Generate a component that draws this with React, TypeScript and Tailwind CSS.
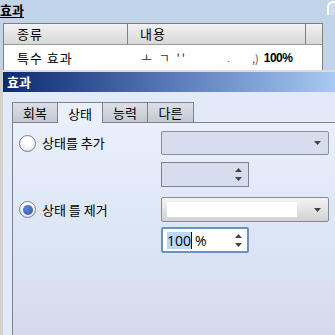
const kr = { fontFamily: '"Noto Sans CJK KR", "Noto Sans", sans-serif' };
const num = { fontFamily: '"Open Sans", "Liberation Sans", sans-serif' };

function Radio({ checked }: { checked?: boolean }) {
  return (
    <div className="w-[17px] h-[17px] rounded-full border border-[#7d8088] bg-[radial-gradient(circle_at_50%_40%,#ffffff_35%,#dfe2e8_80%,#c7cbd3_100%)] flex items-center justify-center">
      {checked && <div className="w-[10px] h-[10px] rounded-full bg-[radial-gradient(circle_at_40%_35%,#5b86d6,#2f56a8)]" />}
    </div>
  );
}

function DownArrow() {
  return (
    <svg width="7" height="4" viewBox="0 0 7 4">
      <path d="M0 0h7L3.5 4z" fill="#444" />
    </svg>
  );
}

function SpinArrows() {
  return (
    <div className="flex flex-col items-center gap-[5px]">
      <svg width="7" height="4" viewBox="0 0 7 4">
        <path d="M0 4h7L3.5 0z" fill="#444" />
      </svg>
      <svg width="7" height="4" viewBox="0 0 7 4">
        <path d="M0 0h7L3.5 4z" fill="#444" />
      </svg>
    </div>
  );
}

export default function App() {
  return (
    <div className="w-[335px] h-[335px] overflow-hidden bg-[#c1d4e8] flex flex-col text-black" style={kr}>
      {/* background window */}
      <div className="h-[70px] flex shrink-0">
        <div className="flex-1 flex flex-col">
          <div className="h-[23px] pt-[1px] text-[13px] leading-[18px] font-bold underline underline-offset-2">효과</div>
          <div className="ml-[3px] w-[320px] border border-[#808080] border-b-0 bg-white text-[13px]">
            <div className="h-[21px] flex bg-gradient-to-b from-[#f2f2f2] to-[#d8d8d8] border-b border-[#9a9a9a] leading-[20px]">
              <div className="w-[124px] pl-[13px] border-r border-[#808080] tracking-[1px]">종류</div>
              <div className="w-[178px] pl-[12px] border-r border-[#808080] tracking-[1px]">내용</div>
              <div className="flex-1" />
            </div>
            <div className="h-[25px] flex items-center leading-[20px]">
              <div className="w-[124px] pl-[13px] tracking-[1px]">특수 효과</div>
              <div className="flex-1 pl-[13px] flex items-center">
                <span className="text-[#333] text-[12px] tracking-[2px]">ㅗ ㄱ ''</span>
                <span className="ml-[40px] text-[#555] text-[10px]">.</span>
                <span className="ml-[22px] text-[#446] text-[11px]">,)</span>
                <span className="ml-[5px] text-[12px] font-bold tracking-[-0.5px]" style={{ fontFamily: '"Liberation Sans", sans-serif' }}>100%</span>
              </div>
            </div>
          </div>
        </div>
        <div className="w-[8px] h-[14px] mt-[1px] border-l-2 border-t-2 border-white rounded-tl-[6px] bg-[#cfdcec]" />
      </div>

      {/* dialog */}
      <div className="flex-1 flex flex-col border-t-2 border-t-[#dedcd6] border-l-[3px] border-l-[#d4d0c8]">
        <div className="h-[20px] shrink-0 bg-gradient-to-r from-[#0d2a70] via-[#5878b8] to-[#a8caf2] text-white text-[13px] font-bold leading-[20px] pl-[4px]">
          효과
        </div>
        <div className="flex-1 bg-[#e2eaf9] pl-[9px] pt-[9px] flex flex-col">
          <div className="h-[21px] flex items-end text-[13px]">
            <div className="w-[46px] h-[20px] border border-[#7c818b] border-b-0 bg-gradient-to-b from-[#dde0e6] to-[#c3c8d1] text-center leading-[19px]">회복</div>
            <div className="w-[45px] h-[21px] border-t border-r border-[#7c818b] bg-[#eaf0fc] text-center leading-[21px] -mb-px relative">상태</div>
            <div className="w-[45px] h-[20px] border-t border-r border-[#7c818b] bg-gradient-to-b from-[#dde0e6] to-[#c3c8d1] text-center leading-[19px]">능력</div>
            <div className="w-[46px] h-[20px] border-t border-r border-[#7c818b] bg-gradient-to-b from-[#dde0e6] to-[#c3c8d1] text-center leading-[19px]">다른</div>
          </div>
          <div className="flex-1 border-l border-t border-[#7c818b] bg-gradient-to-b from-[#e9effc] via-[#dde6f6] to-[#d3daed] pt-[8px] pl-[6px] flex flex-col text-[13px]">
            <div className="h-[24px] flex items-center">
              <div className="w-[142px] flex items-center gap-[6px]">
                <Radio />
                <span>상태를 추가</span>
              </div>
              <div className="w-[168px] h-[24px] rounded-[2px] border border-[#8c8e98] bg-[#d7dcef] flex items-center justify-end pr-[7px]">
                <DownArrow />
              </div>
            </div>
            <div className="h-[25px] mt-[7px] flex">
              <div className="w-[142px]" />
              <div className="w-[88px] h-[25px] border border-[#7f828c] bg-[#d7dcef] flex items-center justify-end pr-[6px]">
                <SpinArrows />
              </div>
            </div>
            <div className="h-[25px] mt-[10px] flex items-center">
              <div className="w-[142px] flex items-center gap-[6px]">
                <Radio checked />
                <span>상태 를 제거</span>
              </div>
              <div className="w-[168px] h-[25px] rounded-[2px] border border-[#8a8a8a] bg-gradient-to-b from-[#f4f4f4] to-[#d2d2d2] flex items-center pl-[5px] pr-[7px]">
                <div className="w-[130px] h-[15px] bg-white" />
                <div className="flex-1" />
                <DownArrow />
              </div>
            </div>
            <div className="h-[26px] mt-[5px] flex">
              <div className="w-[142px]" />
              <div className="w-[88px] h-[26px] rounded-[2px] border-2 border-[#6892c2] bg-white flex items-center pl-[4px] pr-[5px]" style={num}>
                <span className="bg-[#b8d9f8] text-[14px] leading-[17px]">100</span>
                <span className="w-px h-[17px] bg-black" />
                <span className="ml-[3px] text-[14px] leading-[17px]">%</span>
                <div className="flex-1" />
                <SpinArrows />
              </div>
            </div>
          </div>
        </div>
      </div>
    </div>
  );
}
